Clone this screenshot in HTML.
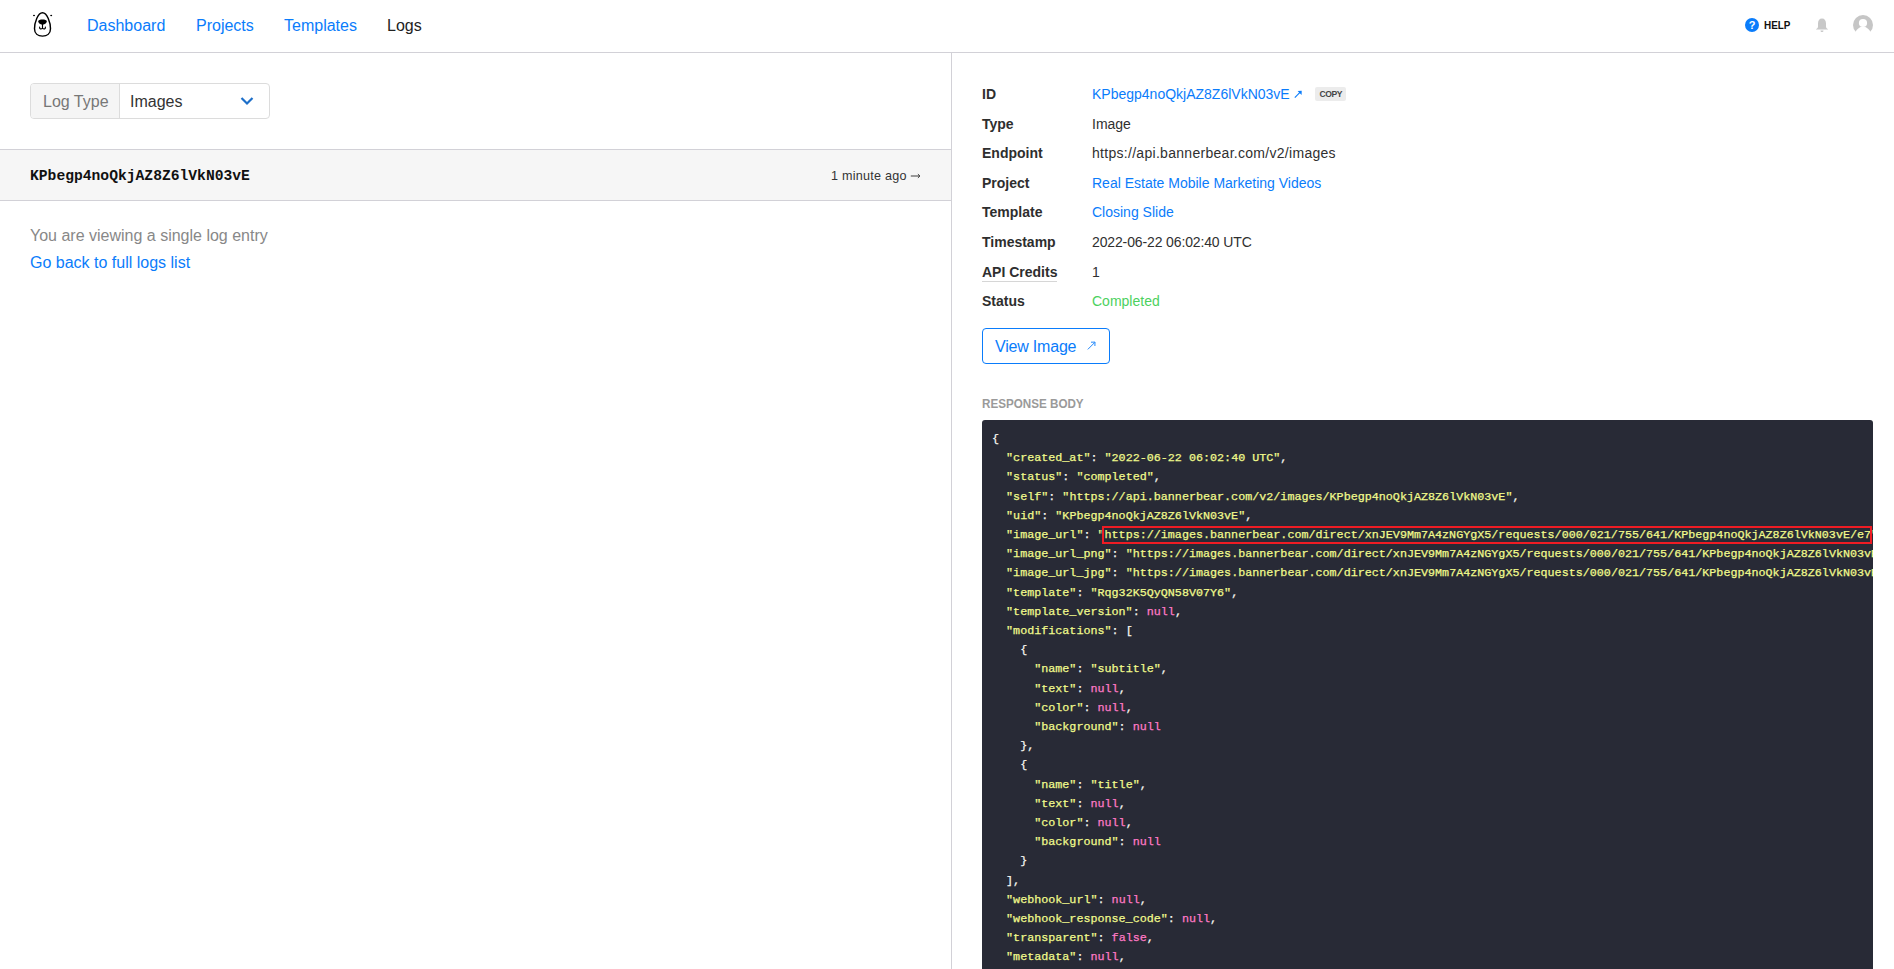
<!DOCTYPE html>
<html><head><meta charset="utf-8">
<style>
*{box-sizing:border-box;margin:0;padding:0}
html,body{width:1894px;height:969px;overflow:hidden;background:#fff;font-family:"Liberation Sans",sans-serif;color:#222}
.abs{position:absolute;white-space:pre}

#hdr{position:absolute;left:0;top:0;width:1894px;height:53px;border-bottom:1px solid #d2d1d7}
.nav{font-size:16px;line-height:20px;top:16px}
#vdiv{position:absolute;left:951px;top:53px;width:1px;height:916px;background:#d2d1d7}
#sel{position:absolute;left:30px;top:83px;width:240px;height:36px;border:1px solid #dcdcdc;border-radius:4px;overflow:hidden}
#sel .lab{position:absolute;left:0;top:0;width:89px;height:34px;background:#f5f5f5;border-right:1px solid #dcdcdc}
#row{position:absolute;left:0;top:149px;width:951px;height:52px;background:#f6f6f6;border-top:1px solid #d2d1d7;border-bottom:1px solid #d2d1d7}
.lbl{font-weight:bold;font-size:14px;line-height:16px;color:#2e2e2e;left:982px}
.val{font-size:14px;line-height:16px;color:#303030;left:1092px}
#code{position:absolute;left:982px;top:420px;width:891px;height:560px;background:#282a36;border-radius:3px;overflow:hidden}
#code pre{position:absolute;left:10px;top:10px;font-family:"Liberation Mono",monospace;font-size:11.72px;line-height:19.2px;color:#f1fa8c;-webkit-text-stroke:0.25px currentColor}
.blue{color:#0a7cfb !important}.p{color:#f8f8f2}.n{color:#ff79c6}
</style></head><body>
<div id="hdr"></div>
<svg class="abs" style="left:0;top:0" width="60" height="52" viewBox="0 0 60 52">
<path d="M42.5,12.8 C37.8,12.8 34.5,22.5 34.5,28.8 C34.5,33.6 38,36.1 42.5,36.1 C47,36.1 50.5,33.6 50.5,28.8 C50.5,22.5 47.2,12.8 42.5,12.8 Z" fill="none" stroke="#000" stroke-width="1.45"/>
<ellipse cx="34" cy="15.4" rx="1" ry="0.75" fill="#000"/><ellipse cx="51.2" cy="15.4" rx="1" ry="0.75" fill="#000"/>
<path d="M38.2,21.2 C38.2,18.9 46.8,18.9 46.8,21.2 C46.8,23.2 44.2,24.6 42.5,24.6 C40.8,24.6 38.2,23.2 38.2,21.2Z" fill="#000"/>
<path d="M42.5,24 L42.5,28.3 M39.6,27 C39.4,29.3 41.2,29.4 42.5,28.3 C43.8,29.4 45.6,29.3 45.4,27" fill="none" stroke="#000" stroke-width="1.15" stroke-linecap="round"/>
</svg>
<div class="abs nav blue" style="left:87px">Dashboard</div>
<div class="abs nav blue" style="left:196px">Projects</div>
<div class="abs nav blue" style="left:284px">Templates</div>
<div class="abs nav" style="left:387px;color:#222">Logs</div>

<div class="abs" style="left:1745px;top:18px;width:14px;height:14px;border-radius:50%;background:#0a7cfb;color:#fff;font-size:11px;font-weight:bold;line-height:14px;text-align:center">?</div>
<div class="abs" style="left:1764px;top:18px;font-size:11px;font-weight:bold;line-height:14px;transform:scaleX(0.9);transform-origin:0 0;color:#111">HELP</div>
<svg class="abs" style="left:1814px;top:17px" width="16" height="16" viewBox="0 0 16 16"><path d="M8,1.5 C5.3,1.5 4,3.5 4,6.5 L4,9.5 C4,10.8 3,11.6 1.8,12.4 L14.2,12.4 C13,11.6 12,10.8 12,9.5 L12,6.5 C12,3.5 10.7,1.5 8,1.5Z M6.5,13.4 C6.5,14.4 7.2,15 8,15 C8.8,15 9.5,14.4 9.5,13.4Z" fill="#c8c8c8"/></svg>
<svg class="abs" style="left:1853px;top:15px" width="20" height="20" viewBox="0 0 20 20"><circle cx="10" cy="10" r="10" fill="#c6c6c6"/><circle cx="10" cy="8" r="4.1" fill="#fff"/><path d="M0,20 L2.5,16.7 C4,14.2 6,12.6 7.6,12 L12.4,12 C14,12.6 16,14.2 17.5,16.7 L20,20Z" fill="#fff"/></svg>

<div id="vdiv"></div>

<div id="sel"><div class="lab"></div></div>
<div class="abs" style="left:43px;top:92px;font-size:16px;line-height:20px;color:#777">Log Type</div>
<div class="abs" style="left:130px;top:92px;font-size:16px;line-height:20px;color:#333">Images</div>
<svg class="abs" style="left:240px;top:96px" width="14" height="10" viewBox="0 0 14 10"><path d="M1.5,2 L7,7.5 L12.5,2" fill="none" stroke="#1d6fc9" stroke-width="2.2"/></svg>

<div id="row"></div>
<div class="abs" style="left:30px;top:167px;font-family:'Liberation Mono',monospace;font-weight:bold;font-size:14.67px;line-height:18px;color:#111">KPbegp4noQkjAZ8Z6lVkN03vE</div>
<div class="abs" style="left:831px;top:168px;font-size:12.6px;line-height:16px;letter-spacing:0.25px;color:#333">1 minute ago</div><svg class="abs" style="left:909px;top:171px" width="13" height="10" viewBox="0 0 13 10"><path d="M1.8,5 L10.8,5 M8.9,3.1 L10.9,5 L8.9,6.9" fill="none" stroke="#333" stroke-width="0.95"/></svg>

<div class="abs" style="left:30px;top:226px;font-size:16px;line-height:20px;color:#888">You are viewing a single log entry</div>
<div class="abs blue" style="left:30px;top:253px;font-size:16px;line-height:20px">Go back to full logs list</div>

<div class="abs lbl" style="top:86px">ID</div>
<div class="abs val blue" style="top:86px">KPbegp4noQkjAZ8Z6lVkN03vE</div>
<svg class="abs" style="left:1293px;top:89px" width="10" height="10" viewBox="0 0 10 10"><path d="M1.8,8.6 L7.2,3.2" fill="none" stroke="#0a7cfb" stroke-width="1.1"/><path d="M4.6,1.9 L8.7,1.8 L8.6,5.9Z" fill="#0a7cfb"/></svg>
<div class="abs" style="left:1315px;top:87px;width:31px;height:14px;border-radius:2px;background:#ececec;color:#454545;font-size:8.6px;font-weight:bold;line-height:15px;letter-spacing:-0.5px;text-indent:0.5px;text-align:center">COPY</div>

<div class="abs lbl" style="top:116px">Type</div>
<div class="abs val" style="top:116px">Image</div>
<div class="abs lbl" style="top:145px">Endpoint</div>
<div class="abs val" style="top:145px;letter-spacing:0.29px">https://api.bannerbear.com/v2/images</div>
<div class="abs lbl" style="top:175px">Project</div>
<div class="abs val blue" style="top:175px">Real Estate Mobile Marketing Videos</div>
<div class="abs lbl" style="top:204px">Template</div>
<div class="abs val blue" style="top:204px">Closing Slide</div>
<div class="abs lbl" style="top:234px">Timestamp</div>
<div class="abs val" style="top:234px;letter-spacing:-0.13px">2022-06-22 06:02:40 UTC</div>
<div class="abs lbl" style="top:264px">API Credits</div>
<div class="abs" style="left:982px;top:281px;width:75px;height:1px;background:#d6d6d6"></div>
<div class="abs val" style="top:264px">1</div>
<div class="abs lbl" style="top:293px">Status</div>
<div class="abs val" style="top:293px;color:#4cd15e">Completed</div>

<div class="abs" style="left:982px;top:328px;width:128px;height:36px;border:1px solid #0a7cfb;border-radius:4px"></div>
<div class="abs blue" style="left:995px;top:337px;font-size:16px;line-height:20px;letter-spacing:-0.2px">View Image</div>
<svg class="abs" style="left:1086px;top:340px" width="11" height="11" viewBox="0 0 11 11"><path d="M1.8,9.4 L8.6,2.6 M5,2.2 L9,2.1 L8.9,6" fill="none" stroke="#0a7cfb" stroke-width="0.9"/></svg>

<div class="abs" style="left:982px;top:396.5px;font-size:12.6px;font-weight:bold;line-height:14px;color:#9a9a9a;transform:scaleX(0.925);transform-origin:0 0">RESPONSE BODY</div>

<div id="code"><pre><span class="p">{</span>
  "created_at"<span class="p">:</span> "2022-06-22 06:02:40 UTC"<span class="p">,</span>
  "status"<span class="p">:</span> "completed"<span class="p">,</span>
  "self"<span class="p">:</span> "https://api.bannerbear.com/v2/images/KPbegp4noQkjAZ8Z6lVkN03vE"<span class="p">,</span>
  "uid"<span class="p">:</span> "KPbegp4noQkjAZ8Z6lVkN03vE"<span class="p">,</span>
  "image_url"<span class="p">:</span> "https://images.bannerbear.com/direct/xnJEV9Mm7A4zNGYgX5/requests/000/021/755/641/KPbegp4noQkjAZ8Z6lVkN03vE/e7"<span class="p">,</span>
  "image_url_png"<span class="p">:</span> "https://images.bannerbear.com/direct/xnJEV9Mm7A4zNGYgX5/requests/000/021/755/641/KPbegp4noQkjAZ8Z6lVkN03vE.png"<span class="p">,</span>
  "image_url_jpg"<span class="p">:</span> "https://images.bannerbear.com/direct/xnJEV9Mm7A4zNGYgX5/requests/000/021/755/641/KPbegp4noQkjAZ8Z6lVkN03vE.jpg"<span class="p">,</span>
  "template"<span class="p">:</span> "Rqg32K5QyQN58V07Y6"<span class="p">,</span>
  "template_version"<span class="p">:</span> <span class="n">null</span><span class="p">,</span>
  "modifications"<span class="p">:</span> <span class="p">[</span>
    <span class="p">{</span>
      "name"<span class="p">:</span> "subtitle"<span class="p">,</span>
      "text"<span class="p">:</span> <span class="n">null</span><span class="p">,</span>
      "color"<span class="p">:</span> <span class="n">null</span><span class="p">,</span>
      "background"<span class="p">:</span> <span class="n">null</span>
    <span class="p">},</span>
    <span class="p">{</span>
      "name"<span class="p">:</span> "title"<span class="p">,</span>
      "text"<span class="p">:</span> <span class="n">null</span><span class="p">,</span>
      "color"<span class="p">:</span> <span class="n">null</span><span class="p">,</span>
      "background"<span class="p">:</span> <span class="n">null</span>
    <span class="p">}</span>
  <span class="p">],</span>
  "webhook_url"<span class="p">:</span> <span class="n">null</span><span class="p">,</span>
  "webhook_response_code"<span class="p">:</span> <span class="n">null</span><span class="p">,</span>
  "transparent"<span class="p">:</span> <span class="n">false</span><span class="p">,</span>
  "metadata"<span class="p">:</span> <span class="n">null</span><span class="p">,</span>
</pre><div style="position:absolute;left:120px;top:106px;width:770px;height:18px;border:2px solid #ee1c24"></div></div>
</body></html>
